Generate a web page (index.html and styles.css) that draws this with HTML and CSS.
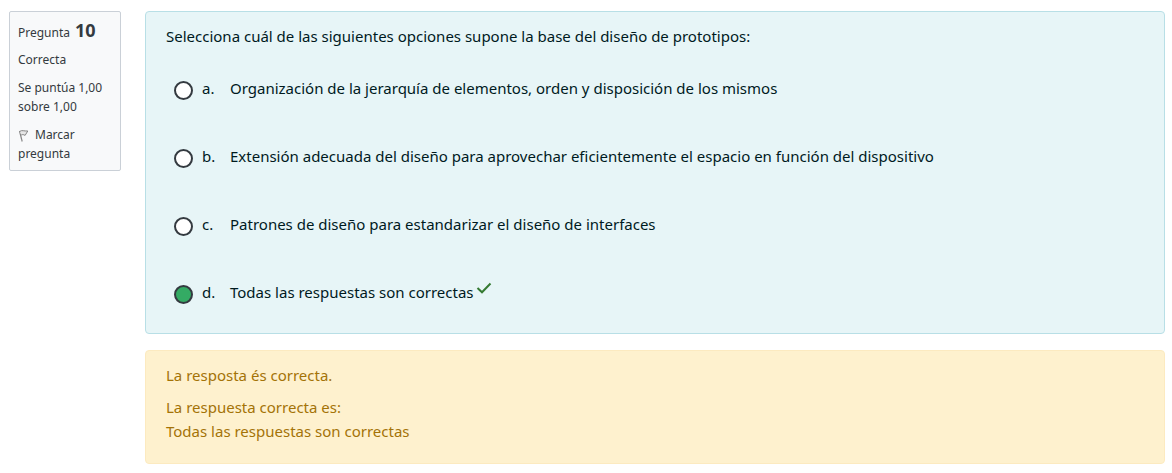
FILE: index.html
```html
<!DOCTYPE html>
<html lang="es">
<head>
<meta charset="utf-8">
<meta name="viewport" content="width=device-width, initial-scale=1">
<title>Pregunta 10</title>
<link rel="stylesheet" href="styles.css">
</head>
<body>
<main class="question">
  <aside class="info">
    <h1 class="info-title">Pregunta <span class="info-number">10</span></h1>
    <p class="info-text">Correcta</p>
    <p class="info-text">Se puntúa 1,00 sobre 1,00</p>
    <button type="button" class="flag-button"><svg class="flag-icon" viewBox="0 0 12 13" aria-hidden="true"><path d="M1.500 2 4.200 12.500" fill="none" stroke="#858585" stroke-width="1.2"/><path d="M2 2.300C4 .800 6 2.300 9.800 2L7 6.500C6 5.500 4.500 5.400 3.200 6" fill="#e6e6e6" stroke="#858585" stroke-width="1"/></svg>Marcar pregunta</button>
  </aside>
  <div class="content">
    <form class="formulation">
      <fieldset class="answers">
        <legend class="prompt">Selecciona cuál de las siguientes opciones supone la base del diseño de prototipos:</legend>
        <div class="answer">
          <input class="radio" type="radio" name="answer" id="answer-a">
          <label class="answer-label" for="answer-a"><span class="letter">a.</span><span>Organización de la jerarquía de elementos, orden y disposición de los mismos</span></label>
        </div>
        <div class="answer">
          <input class="radio" type="radio" name="answer" id="answer-b">
          <label class="answer-label" for="answer-b"><span class="letter">b.</span><span>Extensión adecuada del diseño para aprovechar eficientemente el espacio en función del dispositivo</span></label>
        </div>
        <div class="answer">
          <input class="radio" type="radio" name="answer" id="answer-c">
          <label class="answer-label" for="answer-c"><span class="letter">c.</span><span>Patrones de diseño para estandarizar el diseño de interfaces</span></label>
        </div>
        <div class="answer">
          <input class="radio" type="radio" name="answer" id="answer-d" checked>
          <label class="answer-label" for="answer-d"><span class="letter">d.</span><span>Todas las respuestas son correctas</span></label>
          <svg class="check-icon" viewBox="0 0 16 12" role="img" aria-label="Correcta"><path d="M1.500 6 6 10.300 14.500 1.500" fill="none" stroke="#357a32" stroke-width="2"/></svg>
        </div>
      </fieldset>
    </form>
    <section class="feedback">
      <p class="feedback-text">La resposta és correcta.</p>
      <p class="feedback-text">La respuesta correcta es:<br>Todas las respuestas son correctas</p>
    </section>
  </div>
</main>
</body>
</html>
```
FILE: styles.css
```css
* {
  box-sizing: border-box;
}

body {
  margin: 0;
  background: #fff;
  color: #001a1e;
  font-family: "Segoe UI", "Noto Sans", sans-serif;
  font-size: 15px;
  line-height: 24px;
}

.question {
  display: flex;
  align-items: flex-start;
  gap: 24px;
  padding: 11px 7px 9px 9px;
}

.info {
  flex: 0 0 112px;
  display: flex;
  flex-direction: column;
  gap: 9px;
  padding: 10px 8px 7px;
  border: 1px solid #cad0d7;
  border-radius: 2px;
  background: #f8f9fa;
  color: #343a40;
  font-size: 12px;
  line-height: 19px;
}

.info-title {
  display: flex;
  align-items: baseline;
  gap: 5px;
  margin: 0;
  font-size: 12px;
  font-weight: 400;
  line-height: 16px;
}

.info-number {
  font-size: 18px;
  font-weight: 700;
}

.info-text {
  margin: 0;
}

.flag-button {
  padding: 0;
  border: 0;
  background: none;
  color: inherit;
  font: inherit;
  text-align: left;
  cursor: pointer;
}

.flag-icon {
  width: 12px;
  height: 13px;
  margin-right: 5px;
  vertical-align: middle;
}

.content {
  flex: 1;
  min-width: 0;
  display: flex;
  flex-direction: column;
  gap: 16px;
}

.formulation {
  padding: 12px 20px 29px;
  border: 1px solid #b8dfe6;
  border-radius: 4px;
  background: #e7f5f7;
}

.answers {
  min-width: 0;
  margin: 0;
  padding: 0;
  border: 0;
}

.prompt {
  padding: 0;
  margin-bottom: 28px;
}

.answer {
  display: flex;
  align-items: flex-start;
  padding-left: 8px;
}

.answer + .answer {
  margin-top: 44px;
}

.radio {
  appearance: none;
  flex: none;
  width: 19px;
  height: 19px;
  margin: 5px 9px 0 0;
  border: 2px solid #343a40;
  border-radius: 50%;
  background: #fff;
}

.radio:checked {
  background: #34ab64;
}

.answer-label {
  display: flex;
}

.letter {
  flex: 0 0 28px;
}

.check-icon {
  flex: none;
  width: 16px;
  height: 12px;
  margin: 2px 0 0 2px;
}

.feedback {
  display: flex;
  flex-direction: column;
  gap: 8px;
  padding: 12px 20px 20px;
  border: 1px solid #fceac0;
  border-radius: 4px;
  background: #fef1ce;
  color: #a47307;
}

.feedback-text {
  margin: 0;
}
```
